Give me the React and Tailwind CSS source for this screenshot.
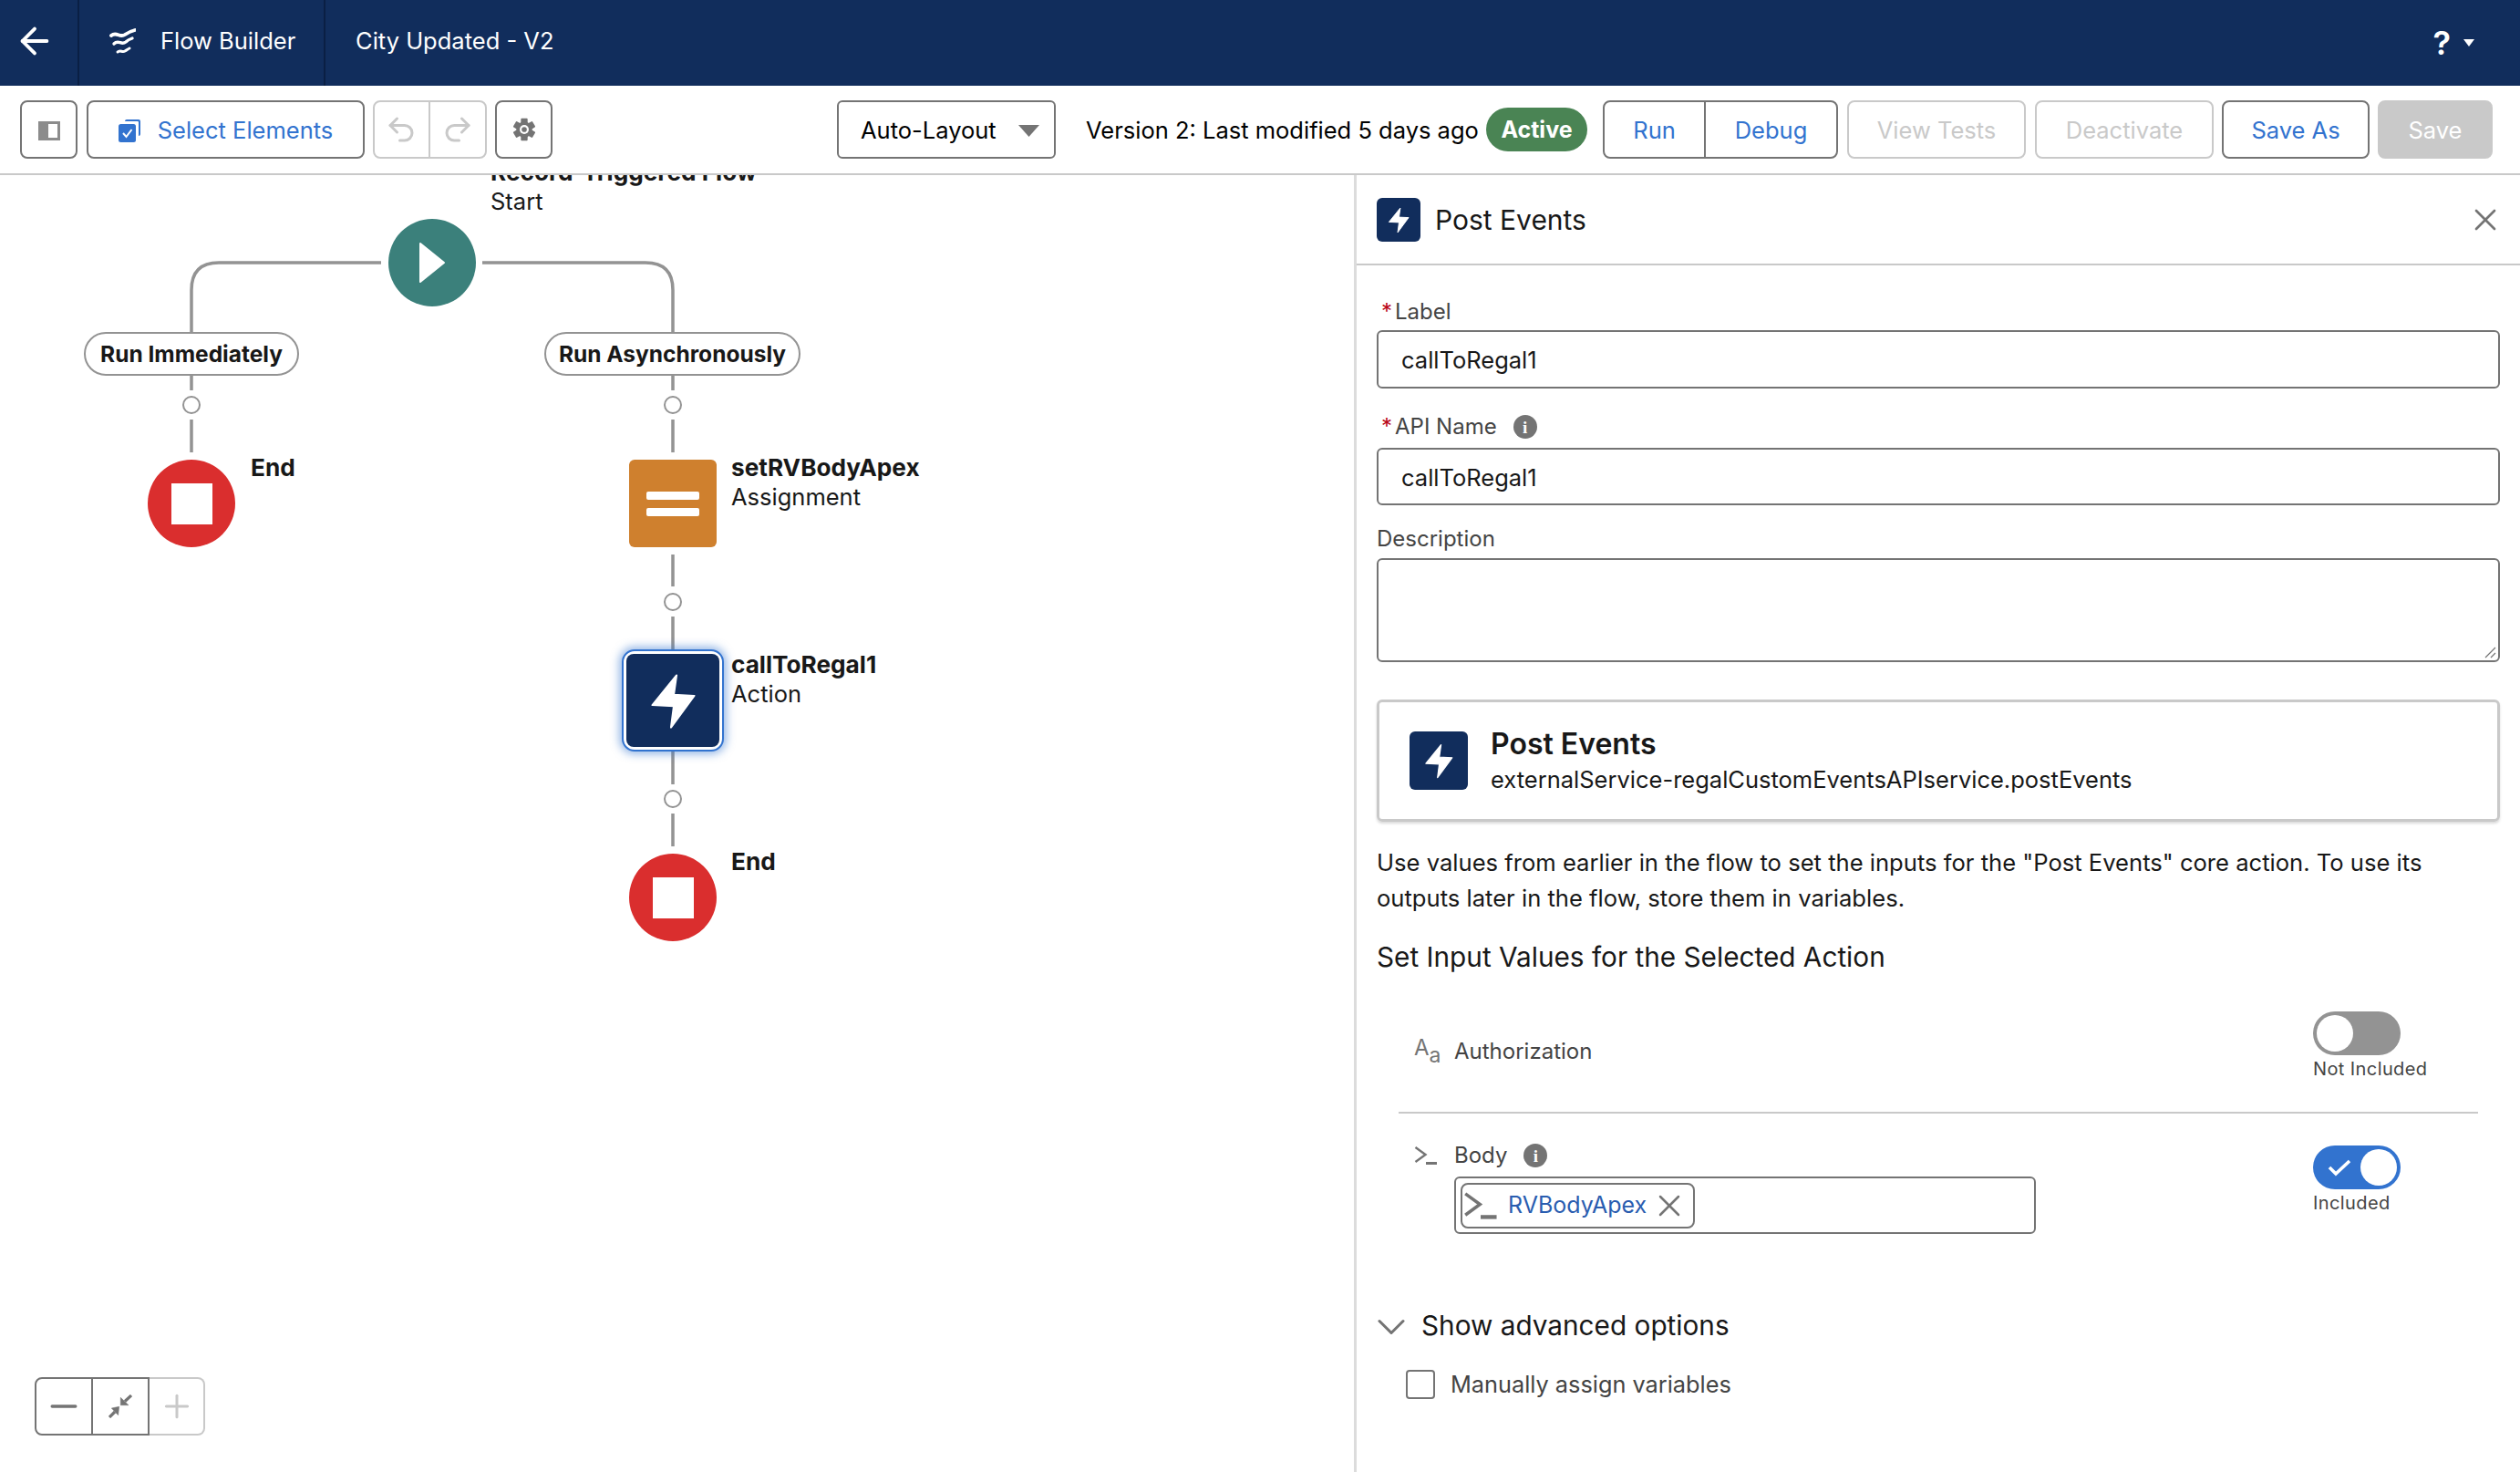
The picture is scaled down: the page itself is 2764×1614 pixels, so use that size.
import React from "react";
import { ArrowLeft, ChevronDown, Minus, Plus, Redo2, Undo2, X } from "lucide-react";

const Bolt = ({ className }) => (
  <svg viewBox="0 0 100 100" className={className}>
    <path
      d="M54 23 L28 55 L51 56 L48 79 L73 45 L51 44 Z"
      fill="#fff"
      stroke="#fff"
      strokeWidth="2"
      strokeLinejoin="round"
    />
  </svg>
);

const Prompt = ({ className }) => (
  <svg viewBox="0 0 26 20" className={className} fill="none" stroke="#747474" strokeWidth="2.4">
    <path d="M1.5 1 L12.5 9 L1.5 17" />
    <path d="M13 18.5 H25" strokeWidth="3" />
  </svg>
);

const InfoDot = () => (
  <span className="flex h-[26px] w-[26px] items-center justify-center rounded-full bg-[#747474] font-['Liberation_Serif',serif] text-[19px] font-bold leading-none text-white">
    i
  </span>
);

const Gear = () => (
  <svg viewBox="0 0 24 24" className="h-[26px] w-[26px]">
    {[0, 60, 120, 180, 240, 300].map((a) => (
      <rect key={a} x="8.6" y="0.8" width="6.8" height="5" rx="0.8" fill="#747474" transform={`rotate(${a} 12 12)`} />
    ))}
    <circle cx="12" cy="12" r="8" fill="#747474" />
    <circle cx="12" cy="12" r="4.6" fill="#fff" />
    <circle cx="12" cy="12" r="2.6" fill="#747474" />
  </svg>
);

const Flow = () => (
  <div className="relative flex-1 overflow-hidden bg-white text-[25.5px] leading-[32px] text-[#181818]">
    <svg className="absolute inset-0 h-full w-full" fill="none" stroke="#939393" strokeWidth="3.5">
      <path d="M418 96 H240 Q210 96 210 126 V172" />
      <path d="M529 96 H708 Q738 96 738 126 V172" />
      <path d="M210 219 V236 M210 268 V304" />
      <path d="M738 219 V236 M738 268 V304 M738 416 V451 M738 484 V520 M738 632 V668 M738 700 V736" />
      <g fill="#fff" strokeWidth="2">
        <circle cx="210" cy="252" r="9" />
        <circle cx="738" cy="252" r="9" />
        <circle cx="738" cy="468" r="9" />
        <circle cx="738" cy="684" r="9" />
      </g>
    </svg>

    <div className="absolute left-[538px] top-[-19px]">
      <div className="text-[26.2px] font-bold">Record-Triggered Flow</div>
      <div>Start</div>
    </div>
    <div className="absolute left-[426px] top-[48px] flex h-[96px] w-[96px] items-center justify-center rounded-full bg-[#3b807b]">
      <svg viewBox="0 0 30 46" className="h-[46px] w-[30px]">
        <path d="M2 2 L28 23 L2 44 Z" fill="#fff" stroke="#fff" strokeWidth="2" strokeLinejoin="round" />
      </svg>
    </div>

    <div className="absolute left-[92px] top-[172px] flex h-[48px] w-[236px] items-center justify-center rounded-full border-2 border-[#939393] bg-white text-[24.5px] font-bold">
      Run Immediately
    </div>
    <div className="absolute left-[597px] top-[172px] flex h-[48px] w-[281px] items-center justify-center rounded-full border-2 border-[#939393] bg-white text-[24.5px] font-bold">
      Run Asynchronously
    </div>

    <div className="absolute left-[162px] top-[312px] flex h-[96px] w-[96px] items-center justify-center rounded-full bg-[#da2e2e]">
      <div className="h-[45px] w-[45px] bg-white" />
    </div>
    <div className="absolute left-[275px] top-[305px] text-[26.2px] font-bold">End</div>

    <div className="absolute left-[690px] top-[312px] flex h-[96px] w-[96px] flex-col items-center justify-center gap-[9px] rounded-[6px] bg-[#cf802e]">
      <div className="h-[9px] w-[58px] rounded-[2px] bg-white" />
      <div className="h-[9px] w-[58px] rounded-[2px] bg-white" />
    </div>
    <div className="absolute left-[802px] top-[305px]">
      <div className="text-[26.2px] font-bold">setRVBodyApex</div>
      <div>Assignment</div>
    </div>

    <div className="absolute left-[682px] top-[520px] flex h-[112px] w-[112px] items-center justify-center rounded-[14px] border-2 border-[#3273cf] bg-white shadow-[0_0_10px_3px_rgba(50,115,207,0.5)]">
      <div className="flex h-[102px] w-[102px] items-center justify-center rounded-[8px] bg-[#112d5c]">
        <Bolt className="h-[102px] w-[102px]" />
      </div>
    </div>
    <div className="absolute left-[802px] top-[521px]">
      <div className="text-[26.2px] font-bold">callToRegal1</div>
      <div>Action</div>
    </div>

    <div className="absolute left-[690px] top-[744px] flex h-[96px] w-[96px] items-center justify-center rounded-full bg-[#da2e2e]">
      <div className="h-[45px] w-[45px] bg-white" />
    </div>
    <div className="absolute left-[802px] top-[737px] text-[26.2px] font-bold">End</div>

    {/* zoom controls */}
    <div className="absolute bottom-[40px] left-[38px] flex h-[64px] w-[187px] bg-white">
      <div className="flex w-[64px] items-center justify-center rounded-l-[8px] border-2 border-[#747474]">
        <Minus size={44} color="#747474" strokeWidth={1.8} />
      </div>
      <div className="flex w-[62px] items-center justify-center border-y-2 border-r-2 border-[#747474]">
        <svg viewBox="0 0 26 26" className="h-[26px] w-[26px]" fill="#747474" stroke="#747474">
          <path d="M1 25 L7 19" strokeWidth="3.2" />
          <path d="M11.7 13.3 L3.3 15 L10.6 22.7 Z" strokeWidth="0.5" />
          <path d="M25 1 L18 7.5" strokeWidth="3.2" />
          <path d="M13.3 11.7 V3.3 L22 11.7 Z" strokeWidth="0.5" />
        </svg>
      </div>
      <div className="flex flex-1 items-center justify-center rounded-r-[8px] border-y-2 border-r-2 border-[#c9c9c9]">
        <Plus size={40} color="#c9c9c9" strokeWidth={1.8} />
      </div>
    </div>
  </div>
);

const Panel = () => (
  <div className="w-[1279px] shrink-0 border-l-[3px] border-[#dcdcdc] text-[25.5px] text-[#181818]">
    <div className="flex h-[99px] items-center border-b-2 border-[#c9c9c9] pl-[22px] pr-[18px]">
      <div className="flex h-[48px] w-[48px] items-center justify-center rounded-[6px] bg-[#112d5c]">
        <Bolt className="h-[48px] w-[48px]" />
      </div>
      <div className="ml-[16px] flex-1 text-[30px] leading-[40px]">Post Events</div>
      <X size={40} color="#747474" strokeWidth={1.6} />
    </div>

    <div className="pl-[22px] pr-[22px] pt-[35px]">
      <div className="flex h-[32px] items-center pl-[5px] text-[24px] text-[#444]">
        <span className="mr-[3px] text-[#ba0517]">*</span>Label
      </div>
      <div className="mt-[4px] flex h-[64px] items-center rounded-[6px] border-2 border-[#747474] pl-[25px] pt-[3px]">callToRegal1</div>
      <div className="mt-[26px] flex h-[32px] items-center pl-[5px] text-[24px] text-[#444]">
        <span className="mr-[3px] text-[#ba0517]">*</span>API Name
        <span className="ml-[18px]"><InfoDot /></span>
      </div>
      <div className="mt-[7px] flex h-[63px] items-center rounded-[6px] border-2 border-[#747474] pl-[25px] pt-[3px]">callToRegal1</div>
      <div className="mt-[21px] flex h-[32px] items-center text-[24px] text-[#444]">Description</div>
      <div className="relative mt-[5px] h-[114px] rounded-[6px] border-2 border-[#747474]">
        <svg viewBox="0 0 14 14" className="absolute bottom-[2px] right-[2px] h-[14px] w-[14px]" stroke="#747474" strokeWidth="1.2">
          <path d="M2 13 L13 2 M8 13 L13 8" />
        </svg>
      </div>

      <div className="mt-[41px] flex h-[134px] items-center rounded-[6px] border-[3px] border-[#c9c9c9] pl-[33px] shadow-[0_2px_3px_rgba(0,0,0,0.15)]">
        <div className="flex h-[64px] w-[64px] items-center justify-center rounded-[6px] bg-[#112d5c]">
          <Bolt className="h-[64px] w-[64px]" />
        </div>
        <div className="ml-[25px]">
          <div className="text-[32px] font-semibold leading-[42px]">Post Events</div>
          <div className="leading-[36px]">externalService-regalCustomEventsAPIservice.postEvents</div>
        </div>
      </div>

      <p className="mt-[25px] text-[25.6px] leading-[39px]">
        Use values from earlier in the flow to set the inputs for the "Post Events" core action. To use its
        <br />
        outputs later in the flow, store them in variables.
      </p>
      <div className="mt-[25px] text-[29.75px] leading-[40px]">Set Input Values for the Selected Action</div>

      <div className="mx-[24px] mt-[40px]">
        <div className="flex h-[112px] border-b-2 border-[#c9c9c9]">
          <div className="mt-[28px] flex h-[32px] flex-1 items-center pl-[17px] text-[24px] text-[#444]">
            <span className="flex w-[44px] text-[#747474]">
              <span className="text-[24px] leading-[24px]">A</span>
              <span className="mt-[8px] text-[23px] leading-[24px]">a</span>
            </span>
            Authorization
          </div>
          <div className="w-[181px]">
            <div className="flex h-[48px] w-[96px] items-center rounded-full bg-[#939393] pl-[4px]">
              <div className="h-[40px] w-[40px] rounded-full bg-white" />
            </div>
            <div className="text-[20px] leading-[30px] tracking-[0.4px] text-[#444]">Not Included</div>
          </div>
        </div>
        <div className="flex">
          <div className="flex-1 pl-[17px]">
            <div className="mt-[30px] flex h-[32px] items-center text-[24px] text-[#444]">
              <span className="w-[44px]"><Prompt className="h-[20px] w-[26px]" /></span>
              Body
              <span className="ml-[18px]"><InfoDot /></span>
            </div>
            <div className="ml-[44px] mt-[7px] flex h-[63px] w-[638px] items-center rounded-[6px] border-2 border-[#747474] pl-[5px]">
              <div className="flex h-[50px] w-[257px] items-center rounded-[8px] border-2 border-[#747474] pl-[1px]">
                <Prompt className="h-[30px] w-[38px]" />
                <span className="ml-[11px] text-[25px] text-[#2a5db0]">RVBodyApex</span>
                <X size={40} color="#747474" strokeWidth={1.5} className="ml-[5px] shrink-0" />
              </div>
            </div>
          </div>
          <div className="w-[181px] pt-[35px]">
            <div className="flex h-[48px] w-[96px] items-center justify-end rounded-full bg-[#3273cf] pr-[4px]">
              <svg viewBox="0 0 26 20" className="mr-[10px] h-[20px] w-[26px]" fill="none" stroke="#fff" strokeWidth="3.6">
                <path d="M2 10 L9 17 L24 3" />
              </svg>
              <div className="h-[40px] w-[40px] rounded-full bg-white" />
            </div>
            <div className="text-[20px] leading-[30px] tracking-[0.4px] text-[#444]">Included</div>
          </div>
        </div>
      </div>

      <div className="mt-[78px] flex h-[44px] items-center">
        <ChevronDown size={52} color="#747474" strokeWidth={1.4} className="-ml-[10px] mt-[3px] shrink-0" />
        <span className="ml-[7px] text-[29.75px]">Show advanced options</span>
      </div>
      <div className="ml-[32px] mt-[27px] flex h-[32px] items-center text-[25.3px] text-[#444]">
        <div className="h-[32px] w-[32px] rounded-[4px] border-2 border-[#747474]" />
        <span className="ml-[17px]">Manually assign variables</span>
      </div>
    </div>
  </div>
);

export default function App() {
  const btn = "flex h-[64px] items-center justify-center rounded-[8px] border-2 pt-[2px]";
  return (
    <div className="flex h-screen flex-col overflow-hidden bg-white font-['Inter',sans-serif]">
      {/* Header */}
      <div className="flex h-[94px] shrink-0 items-center bg-[#112d5c] text-[25.5px] text-white">
        <div className="flex h-full w-[87px] items-center border-r-2 border-[#0a1f44] pb-[5px] pl-[15px]">
          <ArrowLeft size={46} strokeWidth={2} />
        </div>
        <div className="flex h-full w-[270px] items-center border-r-2 border-[#0a1f44] pb-[3px] pl-[32px]">
          <svg viewBox="0 0 30 29" className="h-[29px] w-[30px]" fill="none" stroke="#fff" strokeLinecap="round">
            <path d="M3 8 C9 3 12 11 18 7 C22 4 25 3 29 2" strokeWidth="3.8" />
            <path d="M6 17 C11 12 14 19 19 15 C21 13 23 12 26 11" strokeWidth="3.4" />
            <path d="M10 26 C13 23 15 27 18 25 C20 24 21 23 23 22" strokeWidth="3" />
          </svg>
          <span className="ml-[27px]">Flow Builder</span>
        </div>
        <span className="ml-[33px] flex-1 pb-[3px]">City Updated - V2</span>
        <span className="text-[36px] font-semibold">?</span>
        <svg viewBox="0 0 12 8" className="ml-[14px] mr-[50px] h-[8px] w-[12px]" fill="#fff">
          <path d="M0 0 H12 L6 8 Z" />
        </svg>
      </div>

      {/* Toolbar */}
      <div className="flex h-[98px] shrink-0 items-center border-b-2 border-[#c9c9c9] pl-[22px] text-[25.5px]">
        <div className={`${btn} w-[63px] border-[#747474]`}>
          <div className="flex h-[21px] w-[24px] border-[3px] border-[#8c8c8c]">
            <div className="w-[8px] bg-[#8c8c8c]" />
          </div>
        </div>
        <div className={`${btn} ml-[10px] w-[305px] border-[#747474] text-[#3273cf]`}>
          <svg viewBox="0 0 24 26" className="mr-[19px] h-[26px] w-[24px]">
            <path d="M7 3 a2 2 0 0 1 2 -2 h13 a2 2 0 0 1 2 2 v14 a2 2 0 0 1 -2 2 v-15 a1 1 0 0 0 -1 -1 z" fill="#3273cf" />
            <rect x="0" y="6" width="19" height="20" rx="2.5" fill="#3273cf" />
            <path d="M5 16 L8.5 20 L14.5 12" fill="none" stroke="#fff" strokeWidth="2" />
          </svg>
          Select Elements
        </div>
        <div className="ml-[9px] flex h-[64px] w-[125px] rounded-[8px] border-2 border-[#c9c9c9]">
          <div className="flex w-1/2 items-center justify-center border-r-2 border-[#c9c9c9]">
            <Undo2 size={36} color="#c9c9c9" strokeWidth={2} />
          </div>
          <div className="flex w-1/2 items-center justify-center">
            <Redo2 size={36} color="#c9c9c9" strokeWidth={2} />
          </div>
        </div>
        <div className={`${btn} ml-[9px] w-[63px] border-[#747474] !pt-0`}>
          <Gear />
        </div>

        <div className="ml-[312px] flex h-[64px] w-[240px] items-center justify-between rounded-[6px] border-2 border-[#747474] pl-[24px] pr-[16px] pt-[2px]">
          Auto-Layout
          <svg viewBox="0 0 23 13" className="h-[13px] w-[23px]" fill="#747474">
            <path d="M0 0 H23 L11.5 13 Z" />
          </svg>
        </div>
        <span className="ml-[33px] w-[439px] whitespace-nowrap pt-[2px]">Version 2: Last modified 5 days ago</span>
        <span className="flex h-[48px] w-[111px] items-center justify-center rounded-full bg-[#4a8454] pt-[2px] text-[25px] font-bold text-white">Active</span>
        <div className="ml-[17px] flex h-[64px] w-[258px] rounded-[8px] border-2 border-[#747474] pt-[2px] text-[#3273cf]">
          <div className="-mt-[2px] flex w-[111px] items-center justify-center border-r-2 border-[#747474] pt-[2px]">Run</div>
          <div className="flex flex-1 items-center justify-center">Debug</div>
        </div>
        <div className={`${btn} ml-[10px] w-[196px] border-[#c9c9c9] text-[#c9c9c9]`}>View Tests</div>
        <div className={`${btn} ml-[10px] w-[196px] border-[#c9c9c9] text-[#c9c9c9]`}>Deactivate</div>
        <div className={`${btn} ml-[9px] w-[162px] border-[#747474] text-[#3273cf]`}>Save As</div>
        <div className={`${btn} ml-[9px] w-[126px] border-[#c9c9c9] bg-[#c9c9c9] text-white`}>Save</div>
      </div>

      <div className="flex min-h-0 flex-1">
        <Flow />
        <Panel />
      </div>
    </div>
  );
}
